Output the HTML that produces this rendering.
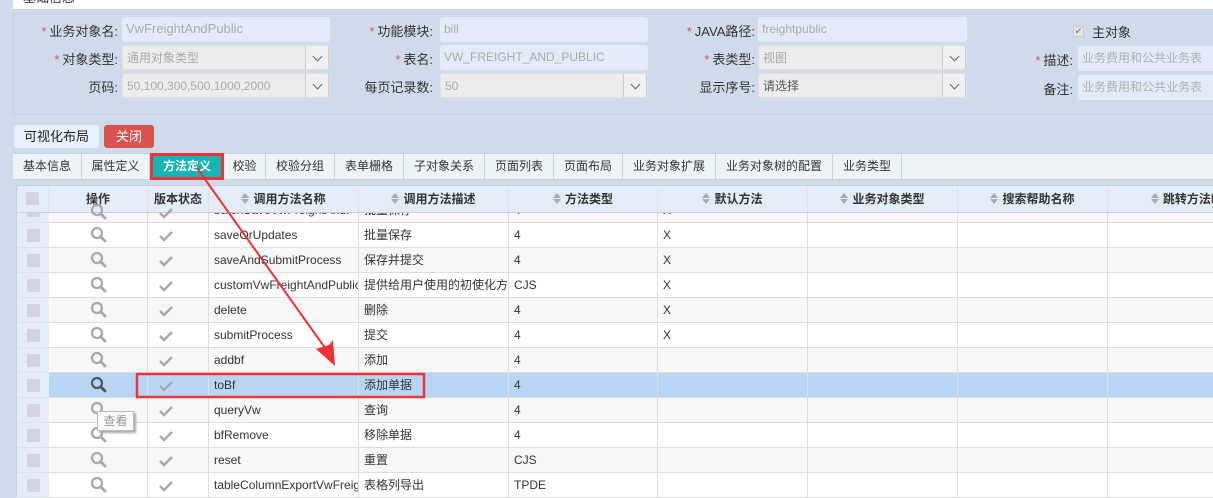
<!DOCTYPE html>
<html><head><meta charset="utf-8"><style>
*{box-sizing:border-box;margin:0;padding:0}
body{width:1213px;height:495px;overflow:hidden;background:#cfdbea;font-family:"Liberation Sans","Noto Sans CJK SC",sans-serif;font-size:12px;color:#333;position:relative}
.a{position:absolute}
.lbl{position:absolute;text-align:right;font-size:13px;color:#333;line-height:25px}
.lbl i{color:#d9534f;font-style:normal;margin-right:3px}
.inp{position:absolute;height:25px;background:#e3ebf8;border-radius:3px;color:#aaa;line-height:24px;padding-left:4px;font-size:12px;white-space:nowrap;overflow:hidden}
.sel{background:#ececec;border:1px solid #e0e0e0}
.sel b{position:absolute;right:0;top:-1px;width:24px;height:25px;border:1px solid #ccc;border-radius:0 3px 3px 0;background:#f0f0f0}
.sel b:after{content:"";position:absolute;left:8px;top:7px;width:6px;height:6px;border-right:1.5px solid #666;border-bottom:1.5px solid #666;transform:rotate(45deg)}
.tab{position:absolute;top:153px;height:26px;line-height:26px;text-align:center;border-right:1px solid #c5d3e3;font-size:12px;color:#333}
.hd{position:absolute;top:186px;height:26px;line-height:26px;font-weight:bold;font-size:12px;color:#333;text-align:center;border-right:1px solid #dde3ea;background:#e4ecf8}
.hd s{display:inline-block;position:relative;width:8px;height:12px;margin-right:4px;vertical-align:-2px}
.hd s:before{content:"";position:absolute;left:0;top:0;border-left:4px solid transparent;border-right:4px solid transparent;border-bottom:5px solid #aaa}
.hd s:after{content:"";position:absolute;left:0;top:6px;border-left:4px solid transparent;border-right:4px solid transparent;border-top:5px solid #aaa}
.row{position:absolute;left:49px;width:1164px;height:25px;border-bottom:1px solid #ddd;background:#fff}
.row.g{background:#f7f7f7}
.row.h{background:#b8d6f4}
.row div{position:absolute;top:0;height:24px;line-height:24px;border-right:1px solid #ddd;white-space:nowrap;overflow:hidden;padding-left:5px;color:#333}
.cb{position:absolute;left:17px;width:32px;height:25px;background:#e4ecf8;border-bottom:1px solid #dde3ea}
.cb:after{content:"";position:absolute;left:10px;top:6px;width:13px;height:13px;background:#d4d4dc}
</style></head><body>
<div class="a" style="left:13px;top:0;width:1200px;height:10px;background:#fff;border-bottom:1px solid #c8d4e2;overflow:hidden"><span style="position:absolute;left:10px;top:-10px;font-size:13px;line-height:16px">基础信息</span></div>
<div class="a" style="left:13px;top:10px;width:1200px;height:105px;border-left:1px solid #c5d1e0;border-bottom:1px solid #c5d1e0"></div>

<div class="lbl" style="left:20px;top:19px;width:98px"><i>*</i>业务对象名:</div>
<div class="inp" style="left:122px;top:17px;width:208px;font-size:13px">VwFreightAndPublic</div>
<div class="lbl" style="left:20px;top:47px;width:98px"><i>*</i>对象类型:</div>
<div class="inp sel" style="left:122px;top:45px;width:208px">通用对象类型<b></b></div>
<div class="lbl" style="left:20px;top:75px;width:98px">页码:</div>
<div class="inp sel" style="left:122px;top:73px;width:208px">50,100,300,500,1000,2000<b></b></div>

<div class="lbl" style="left:340px;top:19px;width:93px"><i>*</i>功能模块:</div>
<div class="inp" style="left:440px;top:17px;width:208px">bill</div>
<div class="lbl" style="left:340px;top:47px;width:93px"><i>*</i>表名:</div>
<div class="inp" style="left:440px;top:45px;width:208px">VW_FREIGHT_AND_PUBLIC</div>
<div class="lbl" style="left:340px;top:75px;width:93px">每页记录数:</div>
<div class="inp sel" style="left:440px;top:73px;width:208px">50<b></b></div>

<div class="lbl" style="left:660px;top:19px;width:95px"><i>*</i>JAVA路径:</div>
<div class="inp" style="left:758px;top:17px;width:209px">freightpublic</div>
<div class="lbl" style="left:660px;top:47px;width:95px"><i>*</i>表类型:</div>
<div class="inp sel" style="left:758px;top:45px;width:209px">视图<b></b></div>
<div class="lbl" style="left:660px;top:75px;width:95px">显示序号:</div>
<div class="inp sel" style="left:758px;top:73px;width:209px;color:#555">请选择<b></b></div>

<div class="a" style="left:1073px;top:26px;width:11px;height:11px;background:#e4e4e4;border:1px solid #ccc;font-size:9px;line-height:9px;color:#888;text-align:center">✔</div>
<div class="a" style="left:1092px;top:24px;line-height:18px;font-size:13px">主对象</div>
<div class="lbl" style="left:1000px;top:48px;width:73px"><i>*</i>描述:</div>
<div class="inp" style="left:1078px;top:46px;width:140px;color:#b0b0b0">业务费用和公共业务表</div>
<div class="lbl" style="left:1000px;top:77px;width:73px">备注:</div>
<div class="inp" style="left:1078px;top:75px;width:140px;color:#b0b0b0">业务费用和公共业务表</div>

<div class="a" style="left:14px;top:125px;width:85px;height:23px;background:#e8f0fb;border-radius:3px;line-height:23px;text-align:center;color:#222;font-size:13px">可视化布局</div>
<div class="a" style="left:104px;top:125px;width:50px;height:23px;background:#d9534f;border-radius:3px;line-height:23px;text-align:center;color:#fff;font-size:13px">关闭</div>

<div class="a" style="left:13px;top:153px;width:1200px;height:27px;background:#eef3f5;border-top:1px solid #c5d3e3;border-bottom:1px solid #c5d3e3"></div>
<div class="tab" style="left:13px;width:69px">基本信息</div>
<div class="tab" style="left:82px;width:68px">属性定义</div>
<div class="tab" style="left:150px;width:74px;background:#17b4b4;color:#fff;font-weight:bold;border:3px solid #ee3338;line-height:21px;height:27px">方法定义</div>
<div class="tab" style="left:224px;width:42px">校验</div>
<div class="tab" style="left:266px;width:69px">校验分组</div>
<div class="tab" style="left:335px;width:69px">表单栅格</div>
<div class="tab" style="left:404px;width:81px">子对象关系</div>
<div class="tab" style="left:485px;width:69px">页面列表</div>
<div class="tab" style="left:554px;width:69px">页面布局</div>
<div class="tab" style="left:623px;width:93px">业务对象扩展</div>
<div class="tab" style="left:716px;width:117px">业务对象树的配置</div>
<div class="tab" style="left:833px;width:69px">业务类型</div>

<div class="a" style="left:16px;top:185px;width:1197px;height:310px;background:#fff;border-left:1px solid #c8d2de;border-top:1px solid #c8d2de"></div>
<div class="hd" style="left:17px;width:32px"><span style="display:inline-block;width:13px;height:13px;background:#d4d4dc;vertical-align:-2px"></span></div>
<div class="hd" style="left:49px;width:99px">操作</div>
<div class="hd" style="left:148px;width:61px">版本状态</div>
<div class="hd" style="left:209px;width:150px"><s></s>调用方法名称</div>
<div class="hd" style="left:359px;width:150px"><s></s>调用方法描述</div>
<div class="hd" style="left:509px;width:149px"><s></s>方法类型</div>
<div class="hd" style="left:658px;width:150px"><s></s>默认方法</div>
<div class="hd" style="left:808px;width:150px"><s></s>业务对象类型</div>
<div class="hd" style="left:958px;width:150px"><s></s>搜索帮助名称</div>
<div class="hd" style="left:1108px;width:150px"><s></s>跳转方法l</div>
<div class="a" style="left:17px;top:212px;width:1196px;height:1px;background:#ccd"></div>

<div style="position:absolute;left:0;top:213px;width:1213px;height:282px;overflow:hidden">
<div class="cb" style="top:-15px"></div><div class="row g" style="top:-15px"><div style="left:0;width:99px"></div><div style="left:99px;width:61px"></div><div style="left:160px;width:150px">batchSaveVwFreightAndP</div><div style="left:310px;width:150px">批量保存</div><div style="left:460px;width:149px">4</div><div style="left:609px;width:150px">X</div><div style="left:759px;width:150px"></div><div style="left:909px;width:150px"></div><div style="left:1059px;width:150px"></div></div>
</div>
<div style="position:absolute;left:0;top:223px;width:1213px;height:272px">
<div class="cb" style="top:0"></div><div class="row" style="top:0"><div style="left:0;width:99px"></div><div style="left:99px;width:61px"></div><div style="left:160px;width:150px">saveOrUpdates</div><div style="left:310px;width:150px">批量保存</div><div style="left:460px;width:149px">4</div><div style="left:609px;width:150px">X</div><div style="left:759px;width:150px"></div><div style="left:909px;width:150px"></div><div style="left:1059px;width:150px"></div></div>
<div class="cb" style="top:25px"></div><div class="row g" style="top:25px"><div style="left:0;width:99px"></div><div style="left:99px;width:61px"></div><div style="left:160px;width:150px">saveAndSubmitProcess</div><div style="left:310px;width:150px">保存并提交</div><div style="left:460px;width:149px">4</div><div style="left:609px;width:150px">X</div><div style="left:759px;width:150px"></div><div style="left:909px;width:150px"></div><div style="left:1059px;width:150px"></div></div>
<div class="cb" style="top:50px"></div><div class="row" style="top:50px"><div style="left:0;width:99px"></div><div style="left:99px;width:61px"></div><div style="left:160px;width:150px">customVwFreightAndPublic</div><div style="left:310px;width:150px">提供给用户使用的初使化方</div><div style="left:460px;width:149px">CJS</div><div style="left:609px;width:150px">X</div><div style="left:759px;width:150px"></div><div style="left:909px;width:150px"></div><div style="left:1059px;width:150px"></div></div>
<div class="cb" style="top:75px"></div><div class="row g" style="top:75px"><div style="left:0;width:99px"></div><div style="left:99px;width:61px"></div><div style="left:160px;width:150px">delete</div><div style="left:310px;width:150px">删除</div><div style="left:460px;width:149px">4</div><div style="left:609px;width:150px">X</div><div style="left:759px;width:150px"></div><div style="left:909px;width:150px"></div><div style="left:1059px;width:150px"></div></div>
<div class="cb" style="top:100px"></div><div class="row" style="top:100px"><div style="left:0;width:99px"></div><div style="left:99px;width:61px"></div><div style="left:160px;width:150px">submitProcess</div><div style="left:310px;width:150px">提交</div><div style="left:460px;width:149px">4</div><div style="left:609px;width:150px">X</div><div style="left:759px;width:150px"></div><div style="left:909px;width:150px"></div><div style="left:1059px;width:150px"></div></div>
<div class="cb" style="top:125px"></div><div class="row g" style="top:125px"><div style="left:0;width:99px"></div><div style="left:99px;width:61px"></div><div style="left:160px;width:150px">addbf</div><div style="left:310px;width:150px">添加</div><div style="left:460px;width:149px">4</div><div style="left:609px;width:150px"></div><div style="left:759px;width:150px"></div><div style="left:909px;width:150px"></div><div style="left:1059px;width:150px"></div></div>
<div class="cb" style="top:150px"></div><div class="row h" style="top:150px"><div style="left:0;width:99px"></div><div style="left:99px;width:61px"></div><div style="left:160px;width:150px">toBf</div><div style="left:310px;width:150px">添加单据</div><div style="left:460px;width:149px">4</div><div style="left:609px;width:150px"></div><div style="left:759px;width:150px"></div><div style="left:909px;width:150px"></div><div style="left:1059px;width:150px"></div></div>
<div class="cb" style="top:175px"></div><div class="row g" style="top:175px"><div style="left:0;width:99px"></div><div style="left:99px;width:61px"></div><div style="left:160px;width:150px">queryVw</div><div style="left:310px;width:150px">查询</div><div style="left:460px;width:149px">4</div><div style="left:609px;width:150px"></div><div style="left:759px;width:150px"></div><div style="left:909px;width:150px"></div><div style="left:1059px;width:150px"></div></div>
<div class="cb" style="top:200px"></div><div class="row" style="top:200px"><div style="left:0;width:99px"></div><div style="left:99px;width:61px"></div><div style="left:160px;width:150px">bfRemove</div><div style="left:310px;width:150px">移除单据</div><div style="left:460px;width:149px">4</div><div style="left:609px;width:150px"></div><div style="left:759px;width:150px"></div><div style="left:909px;width:150px"></div><div style="left:1059px;width:150px"></div></div>
<div class="cb" style="top:225px"></div><div class="row g" style="top:225px"><div style="left:0;width:99px"></div><div style="left:99px;width:61px"></div><div style="left:160px;width:150px">reset</div><div style="left:310px;width:150px">重置</div><div style="left:460px;width:149px">CJS</div><div style="left:609px;width:150px"></div><div style="left:759px;width:150px"></div><div style="left:909px;width:150px"></div><div style="left:1059px;width:150px"></div></div>
<div class="cb" style="top:250px"></div><div class="row" style="top:250px"><div style="left:0;width:99px"></div><div style="left:99px;width:61px"></div><div style="left:160px;width:150px">tableColumnExportVwFreight</div><div style="left:310px;width:150px">表格列导出</div><div style="left:460px;width:149px">TPDE</div><div style="left:609px;width:150px"></div><div style="left:759px;width:150px"></div><div style="left:909px;width:150px"></div><div style="left:1059px;width:150px"></div></div>
</div>

<svg class="a" style="left:0;top:0" width="1213" height="495">
<defs>
<g id="m"><circle cx="0" cy="0" r="5" fill="none" stroke-width="2.2"/><line x1="3.6" y1="3.6" x2="8" y2="8" stroke-width="2.8" stroke-linecap="round"/></g>
<polyline id="c" points="-6,0 -2,4 6,-4" fill="none" stroke-width="2.4"/>
</defs>
<g stroke="#a8a8a8">
<use href="#m" x="97" y="210"/><use href="#c" x="166" y="213"/>
<use href="#m" x="97" y="233"/><use href="#c" x="166" y="236"/>
<use href="#m" x="97" y="258"/><use href="#c" x="166" y="261"/>
<use href="#m" x="97" y="283"/><use href="#c" x="166" y="286"/>
<use href="#m" x="97" y="308"/><use href="#c" x="166" y="311"/>
<use href="#m" x="97" y="333"/><use href="#c" x="166" y="336"/>
<use href="#m" x="97" y="358"/><use href="#c" x="166" y="361"/>
<use href="#c" x="166" y="386"/>
<use href="#m" x="97" y="408"/><use href="#c" x="166" y="411"/>
<use href="#m" x="97" y="433"/><use href="#c" x="166" y="436"/>
<use href="#m" x="97" y="458"/><use href="#c" x="166" y="461"/>
<use href="#m" x="97" y="483"/><use href="#c" x="166" y="486"/>
</g>
<use href="#m" x="97" y="383" stroke="#555"/>
<rect x="137" y="374" width="287" height="23" fill="none" stroke="#ee3338" stroke-width="2.5"/>
<line x1="197" y1="168" x2="328" y2="352" stroke="#ee3338" stroke-width="2"/>
<polygon points="335,366 316,349 329,345 333,340" fill="#ee3338"/>
</svg>
<div class="a" style="left:97px;top:411px;width:37px;height:20px;background:#fafafa;border:1px solid #bbb;box-shadow:2px 2px 2px #aaa;color:#999;line-height:18px;text-align:center">查看</div>
</body></html>
